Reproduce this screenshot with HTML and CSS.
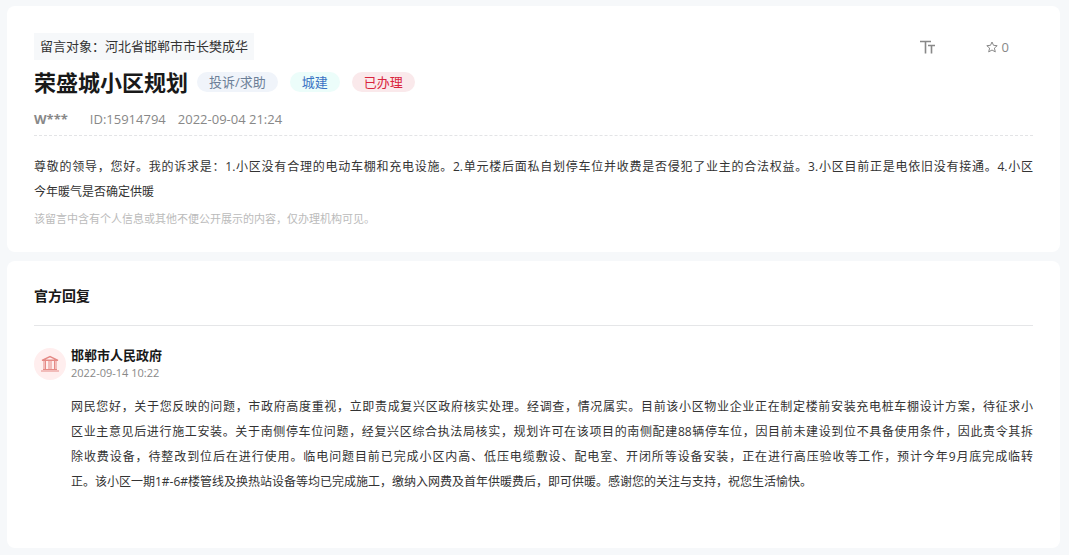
FILE: index.html
```html
<!DOCTYPE html>
<html lang="zh-CN">
<head>
<meta charset="utf-8">
<meta name="viewport" content="width=device-width, initial-scale=1">
<title>荣盛城小区规划</title>
<link rel="stylesheet" href="styles.css">
</head>
<body>
<main class="page">
  <article class="card message">
    <header class="message-head">
      <div class="top-row">
        <p class="recipient">留言对象：河北省邯郸市市长樊成华</p>
        <div class="actions">
          <button class="action" type="button" aria-label="字号">
            <svg class="icon-size" viewBox="0 0 16 14" aria-hidden="true"><path d="M0 1.5H11M5.5 1.5V13.5M8 5.5H15M11.5 5.5V13.5"/></svg>
          </button>
          <button class="action" type="button" aria-label="收藏 0">
            <svg class="icon-star" viewBox="0 0 12 12" aria-hidden="true"><path d="M6 1 7.5 4.3 11.2 4.7 8.4 7.1 9.3 10.9 6 9 2.7 10.9 3.6 7.1 0.8 4.7 4.5 4.3Z"/></svg>
            <span>0</span>
          </button>
        </div>
      </div>
      <div class="title-row">
        <h1 class="title">荣盛城小区规划</h1>
        <div class="tags">
          <span class="tag tag-type">投诉/求助</span>
          <span class="tag tag-field">城建</span>
          <span class="tag tag-done">已办理</span>
        </div>
      </div>
      <div class="meta">
        <strong class="author">W***</strong>
        <span>ID:15914794</span>
        <time datetime="2022-09-04T21:24">2022-09-04 21:24</time>
      </div>
    </header>
    <p class="text">
      <span class="line">尊敬的领导，您好。我的诉求是：1.小区没有合理的电动车棚和充电设施。2.单元楼后面私自划停车位并收费是否侵犯了业主的合法权益。3.小区目前正是电依旧没有接通。4.小区</span>
      <span class="line line-last">今年暖气是否确定供暖</span>
    </p>
    <p class="note">该留言中含有个人信息或其他不便公开展示的内容，仅办理机构可见。</p>
  </article>

  <section class="card reply">
    <h2 class="section-title">官方回复</h2>
    <div class="reply-body">
      <div class="avatar">
        <svg class="icon-bank" viewBox="0 0 20 18" aria-hidden="true"><path class="roof" d="M2 5.3 10 1.5 18 5.3Z"/><path d="M1 16H19M3 14.5H17M4 6V14.5M5.5 6V14.5M9 6V14.5M11 6V14.5M14.5 6V14.5M16 6V14.5"/></svg>
      </div>
      <div class="reply-main">
        <h3 class="office">邯郸市人民政府</h3>
        <time class="reply-date" datetime="2022-09-14T10:22">2022-09-14 10:22</time>
        <p class="text">
          <span class="line">网民您好，关于您反映的问题，市政府高度重视，立即责成复兴区政府核实处理。经调查，情况属实。目前该小区物业企业正在制定楼前安装充电桩车棚设计方案，待征求小</span>
          <span class="line">区业主意见后进行施工安装。关于南侧停车位问题，经复兴区综合执法局核实，规划许可在该项目的南侧配建88辆停车位，因目前未建设到位不具备使用条件，因此责令其拆</span>
          <span class="line">除收费设备，待整改到位后在进行使用。临电问题目前已完成小区内高、低压电缆敷设、配电室、开闭所等设备安装，正在进行高压验收等工作，预计今年9月底完成临转</span>
          <span class="line line-last">正。该小区一期1#-6#楼管线及换热站设备等均已完成施工，缴纳入网费及首年供暖费后，即可供暖。感谢您的关注与支持，祝您生活愉快。</span>
        </p>
      </div>
    </div>
  </section>
</main>
</body>
</html>
```
FILE: styles.css
```css
* { box-sizing: border-box; }
body {
  margin: 0;
  background: #f6f8fa;
  color: #333;
  font-family: "Open Sans", "Noto Sans CJK SC", sans-serif;
  font-size: 13px;
}
h1, h2, h3, p { margin: 0; }

.page {
  display: flex;
  flex-direction: column;
  gap: 9px;
  padding: 6px 9px 7px 7px;
}
.card {
  padding: 27px;
  border-radius: 8px;
  background: #fff;
}

.message { padding-bottom: 22px; }
.message-head {
  padding-bottom: 6px;
  border-bottom: 1px dashed #e3e4e6;
}
.top-row {
  display: flex;
  align-items: center;
  justify-content: space-between;
}
.recipient {
  padding: 0 6px;
  background: #f6f8fa;
  line-height: 27px;
}
.actions {
  display: flex;
  gap: 50px;
  padding-right: 24px;
}
.action {
  display: flex;
  align-items: center;
  gap: 4px;
  padding: 0;
  border: 0;
  background: none;
  color: #888;
  font: inherit;
  line-height: 20px;
  cursor: pointer;
}
.action svg {
  fill: none;
  stroke: #888;
}
.icon-size {
  width: 16px;
  height: 14px;
  stroke-width: 1.6;
}
.icon-star { width: 12px; height: 12px; }

.title-row {
  display: flex;
  align-items: center;
  gap: 9px;
  margin-top: 6px;
}
.title {
  color: #191919;
  font-size: 22px;
  line-height: 32px;
}
.tags {
  display: flex;
  gap: 12px;
}
.tag {
  padding: 0 12px;
  border-radius: 10px;
  line-height: 20px;
}
.tag-type { background: #f0f4fa; color: #6c7f98; }
.tag-field { background: #ecfdfa; color: #3a74c4; }
.tag-done { background: #fae9eb; color: #d9243c; }

.meta {
  display: flex;
  gap: 12px;
  margin-top: 11px;
  color: #888;
  line-height: 20px;
}
.author { margin-right: 10px; }

.text {
  font-size: 12px;
  line-height: 25px;
}
.line {
  display: block;
  text-align: justify;
  text-align-last: justify;
}
.line-last { text-align-last: start; }
.message .text { margin-top: 18px; }
.note {
  margin-top: 4px;
  color: #bbb;
  font-size: 11px;
  line-height: 22px;
}

.reply { padding-bottom: 54px; }
.section-title {
  padding-bottom: 21px;
  border-bottom: 1px solid #e5e6e8;
  color: #191919;
  font-size: 14px;
  line-height: 16px;
}
.reply-body {
  display: flex;
  gap: 5px;
  margin-top: 22px;
}
.avatar {
  display: flex;
  flex: none;
  align-items: center;
  justify-content: center;
  width: 32px;
  height: 32px;
  border-radius: 50%;
  background: #ffeeee;
}
.icon-bank {
  width: 20px;
  height: 18px;
  fill: none;
  stroke: #e58a86;
}
.roof { stroke-width: 1.4; }
.reply-main { flex: 1; min-width: 0; }
.office {
  color: #191919;
  font-size: 13px;
  line-height: 15px;
}
.reply-date {
  display: block;
  color: #888;
  font-size: 11px;
  line-height: 19px;
}
.reply .text { margin-top: 12px; }
```
